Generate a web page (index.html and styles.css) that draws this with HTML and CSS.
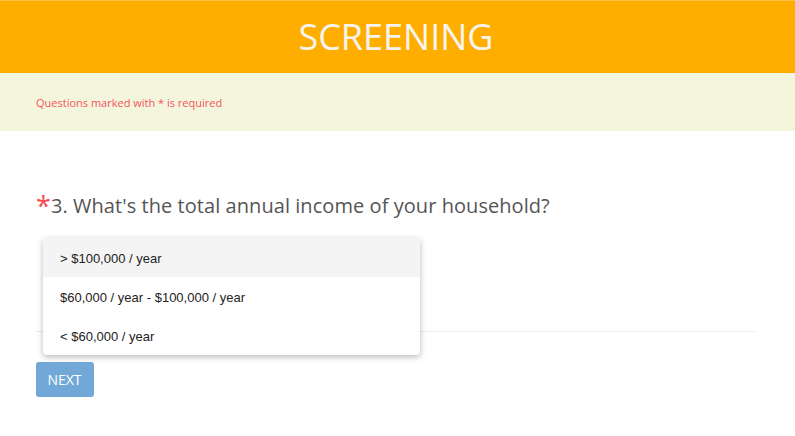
FILE: index.html
```html
<!DOCTYPE html>
<html lang="en">
<head>
<meta charset="utf-8">
<title>Screening</title>
<link rel="stylesheet" href="styles.css">
</head>
<body>
<header class="header">
  <h1 class="title">SCREENING</h1>
</header>
<div class="notice">
  <p class="notice-text">Questions marked with * is required</p>
</div>
<main class="content">
  <div class="question">
    <h2 class="question-title"><span class="req">*</span>3. What's the total annual income of your household?</h2>
    <div class="select-area"></div>
    <ul class="menu">
      <li class="menu-item active">&gt; $100,000 / year</li>
      <li class="menu-item">$60,000 / year - $100,000 / year</li>
      <li class="menu-item">&lt; $60,000 / year</li>
    </ul>
  </div>
  <hr class="divider">
  <button class="next" type="button">NEXT</button>
</main>
</body>
</html>
```
FILE: styles.css
```css
html, body {
  margin: 0;
  padding: 0;
  background: #fff;
  font-family: "Open Sans", "Liberation Sans", sans-serif;
}
.header {
  height: 72px;
  background: #ffae00;
  border-top: 1px solid #ffc24a;
  display: flex;
  align-items: center;
  justify-content: center;
}
.title {
  margin: 0 3px 0 0;
  font-size: 36px;
  font-weight: 400;
  color: #f6f4ef;
  line-height: 1;
}
.notice {
  height: 58px;
  background: #f3f6dc;
  padding: 0 36px;
  display: flex;
  align-items: center;
}
.notice-text {
  margin: 0;
  font-size: 11px;
  color: #f5535e;
}
.content {
  padding: 0 40px 0 36px;
}
.question {
  position: relative;
  padding-top: 60px;
}
.question-title {
  margin: 0;
  font-size: 20px;
  font-weight: 400;
  color: #555;
  line-height: 28px;
  display: flex;
  align-items: flex-start;
  padding-top: 1px;
  letter-spacing: 0.06px;
}
.req {
  color: #f54b52;
  font-size: 27px;
  line-height: 28px;
  margin-right: 0;
}
.select-area {
  height: 111px;
}
.menu {
  position: absolute;
  left: 7px;
  top: 107px;
  width: 377px;
  margin: 0;
  padding: 0;
  list-style: none;
  background: #fff;
  border-radius: 4px;
  box-shadow: 0 2px 6px rgba(0,0,0,0.28);
  overflow: hidden;
}
.menu-item {
  height: 39px;
  line-height: 41px;
  padding-left: 17px;
  font-family: "Liberation Sans", Arial, sans-serif;
  font-size: 13px;
  color: #222;
}
.menu-item.active {
  background: #f4f4f4;
}
.divider {
  margin: 0;
  border: 0;
  border-top: 1px solid #ebebeb;
  width: 719px;
}
.next {
  margin-top: 30px;
  width: 58px;
  height: 35px;
  border: 0;
  border-radius: 3px;
  background: #72a8d7;
  color: #fff;
  font-family: "Open Sans", sans-serif;
  font-size: 14px;
  padding: 0 1px 0 0;
}
```
